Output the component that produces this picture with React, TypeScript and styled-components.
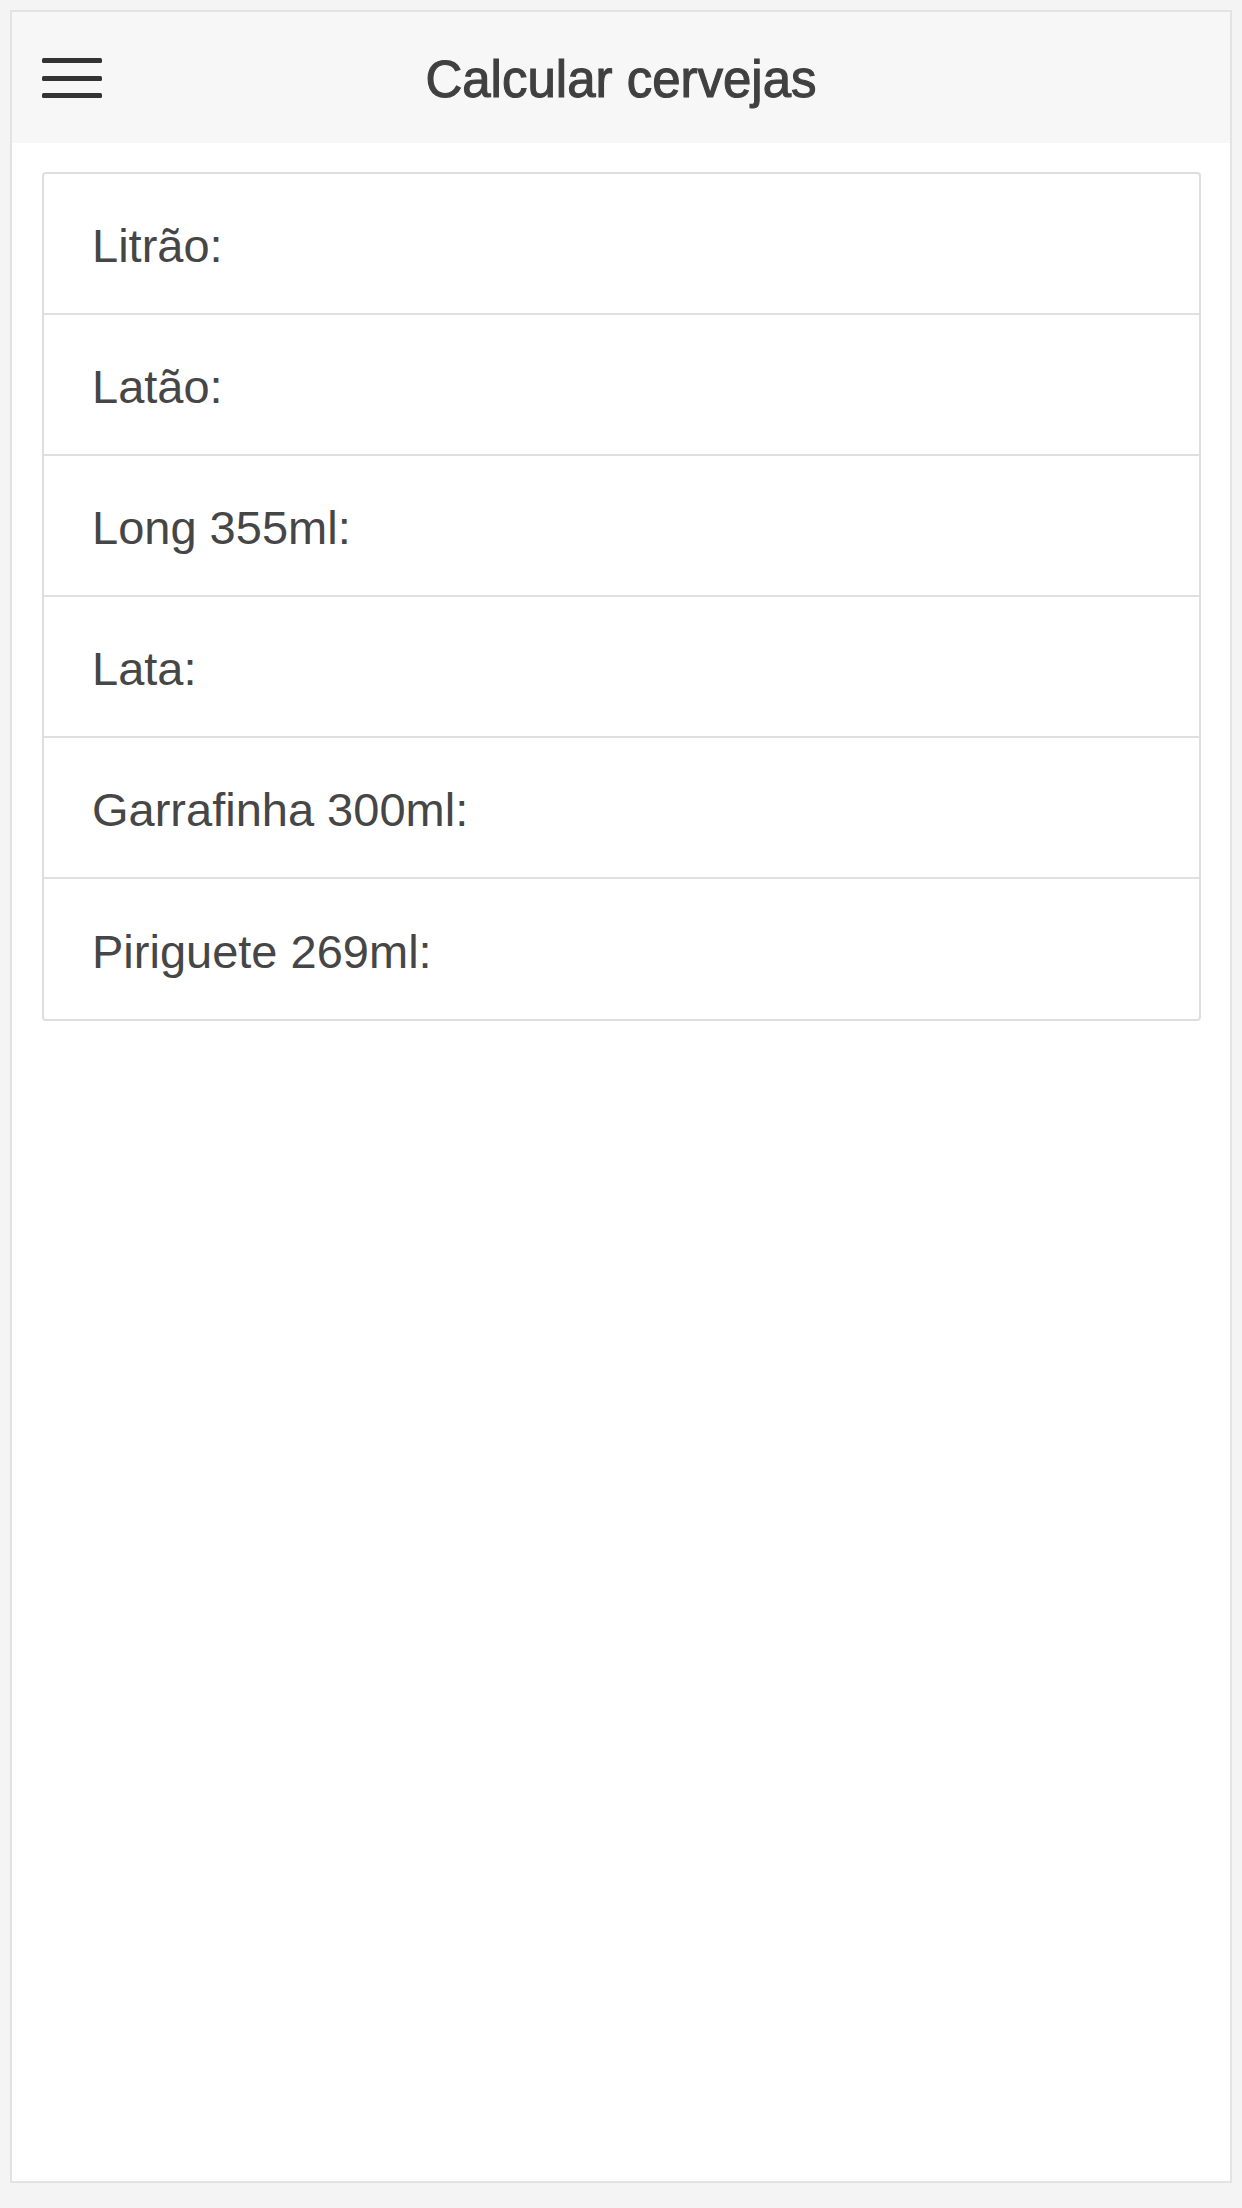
import React from "react";
import styled, { createGlobalStyle } from "styled-components";

const GlobalStyle = createGlobalStyle`
  html, body {
    margin: 0;
    padding: 0;
    background: #f4f4f4;
    font-family: "Liberation Sans", Arial, Helvetica, sans-serif;
  }
  * { box-sizing: border-box; }
`;

const Screen = styled.div`
  width: 1242px;
  height: 2208px;
  padding: 10px 10px 25px 10px;
  background: #f4f4f4;
`;

const Frame = styled.div`
  height: 100%;
  border: 2px solid #e3e3e3;
  background: #ffffff;
  display: flex;
  flex-direction: column;
`;

const Toolbar = styled.header`
  height: 131px;
  background: #f7f7f7;
  display: grid;
  grid-template-columns: 100px 1fr 100px;
  align-items: center;
`;

const MenuButton = styled.button`
  border: none;
  background: transparent;
  padding: 0 0 0 30px;
  display: flex;
  align-items: center;
  height: 100%;
  cursor: pointer;
`;

const Title = styled.h1`
  margin: 0;
  text-align: center;
  font-size: 51px;
  font-weight: 400;
  color: #404040;
  -webkit-text-stroke: 1.1px #404040;
  padding-top: 4px;
`;

const Content = styled.main`
  padding: 29px 29px 0 30px;
`;

const List = styled.ul`
  list-style: none;
  margin: 0;
  padding: 0;
  border: 2px solid #dedede;
  border-radius: 4px;
`;

const Row = styled.li<{ $last?: boolean }>`
  height: ${(p) => (p.$last ? "140px" : "141px")};
  display: flex;
  align-items: center;
  padding: 4px 0 0 48px;
  font-size: 47px;
  color: #464646;
  border-bottom: ${(p) => (p.$last ? "none" : "2px solid #e0e0e0")};
`;

const MenuIcon = () => (
  <svg width="60" height="45" viewBox="0 0 60 45" aria-hidden="true">
    <rect x="0" y="3" width="60" height="5" rx="1.5" fill="#333333" />
    <rect x="0" y="21" width="60" height="5" rx="1.5" fill="#333333" />
    <rect x="0" y="38" width="60" height="5" rx="1.5" fill="#333333" />
  </svg>
);

const items = [
  "Litrão:",
  "Latão:",
  "Long 355ml:",
  "Lata:",
  "Garrafinha 300ml:",
  "Piriguete 269ml:",
];

export default function App() {
  return (
    <>
      <GlobalStyle />
      <Screen>
        <Frame>
          <Toolbar>
            <MenuButton aria-label="Menu">
              <MenuIcon />
            </MenuButton>
            <Title>Calcular cervejas</Title>
            <span />
          </Toolbar>
          <Content>
            <List>
              {items.map((t, i) => (
                <Row key={t} $last={i === items.length - 1}>
                  {t}
                </Row>
              ))}
            </List>
          </Content>
        </Frame>
      </Screen>
    </>
  );
}
